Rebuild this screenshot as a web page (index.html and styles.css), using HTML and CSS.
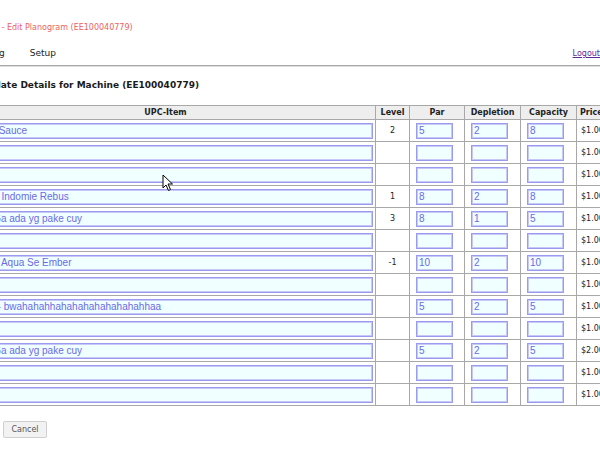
FILE: index.html
```html
<!DOCTYPE html>
<html>
<head>
<meta charset="utf-8">
<title>Edit Planogram</title>
<link rel="stylesheet" href="styles.css">
</head>
<body>
<div class="page">
  <div class="title">Planogram - Edit Planogram (EE100040779)</div>
  <div class="nav">
    <div class="nav-links"><span>Reporting</span><span>Setup</span></div>
    <a class="logout" href="#">Logout</a>
  </div>
  <hr class="rule">
  <h2 class="heading">Planogram Template Details for Machine (EE100040779)</h2>
  <table class="grid">
    <colgroup>
      <col class="c-upc"><col class="c-level"><col class="c-par"><col class="c-dep"><col class="c-cap"><col class="c-price">
    </colgroup>
    <thead>
      <tr><th>UPC-Item</th><th>Level</th><th>Par</th><th>Depletion</th><th>Capacity</th><th class="left">Price</th></tr>
    </thead>
    <tbody>
      <tr><td class="upc"><input class="in-upc" value="10021 - Sauce"></td><td class="lvl">2</td><td class="num"><input class="in-num" value="5"></td><td class="num"><input class="in-num" value="2"></td><td class="num"><input class="in-num" value="8"></td><td class="price">$1.00</td></tr>
      <tr><td class="upc"><input class="in-upc" value=""></td><td class="lvl"></td><td class="num"><input class="in-num" value=""></td><td class="num"><input class="in-num" value=""></td><td class="num"><input class="in-num" value=""></td><td class="price">$1.00</td></tr>
      <tr><td class="upc"><input class="in-upc" value=""></td><td class="lvl"></td><td class="num"><input class="in-num" value=""></td><td class="num"><input class="in-num" value=""></td><td class="num"><input class="in-num" value=""></td><td class="price">$1.00</td></tr>
      <tr><td class="upc"><input class="in-upc" value="BR012 - Indomie Rebus"></td><td class="lvl">1</td><td class="num"><input class="in-num" value="8"></td><td class="num"><input class="in-num" value="2"></td><td class="num"><input class="in-num" value="8"></td><td class="price">$1.00</td></tr>
      <tr><td class="upc"><input class="in-upc" value="1004 - Ga ada yg pake cuy"></td><td class="lvl">3</td><td class="num"><input class="in-num" value="8"></td><td class="num"><input class="in-num" value="1"></td><td class="num"><input class="in-num" value="5"></td><td class="price">$1.00</td></tr>
      <tr><td class="upc"><input class="in-upc" value=""></td><td class="lvl"></td><td class="num"><input class="in-num" value=""></td><td class="num"><input class="in-num" value=""></td><td class="num"><input class="in-num" value=""></td><td class="price">$1.00</td></tr>
      <tr><td class="upc"><input class="in-upc" value="BR013 - Aqua Se Ember"></td><td class="lvl">-1</td><td class="num"><input class="in-num" value="10"></td><td class="num"><input class="in-num" value="2"></td><td class="num"><input class="in-num" value="10"></td><td class="price">$1.00</td></tr>
      <tr><td class="upc"><input class="in-upc" value=""></td><td class="lvl"></td><td class="num"><input class="in-num" value=""></td><td class="num"><input class="in-num" value=""></td><td class="num"><input class="in-num" value=""></td><td class="price">$1.00</td></tr>
      <tr><td class="upc"><input class="in-upc" value="Tester1 - bwahahahhahahahahahahahahhaa"></td><td class="lvl"></td><td class="num"><input class="in-num" value="5"></td><td class="num"><input class="in-num" value="2"></td><td class="num"><input class="in-num" value="5"></td><td class="price">$1.00</td></tr>
      <tr><td class="upc"><input class="in-upc" value=""></td><td class="lvl"></td><td class="num"><input class="in-num" value=""></td><td class="num"><input class="in-num" value=""></td><td class="num"><input class="in-num" value=""></td><td class="price">$1.00</td></tr>
      <tr><td class="upc"><input class="in-upc" value="1004 - Ga ada yg pake cuy"></td><td class="lvl"></td><td class="num"><input class="in-num" value="5"></td><td class="num"><input class="in-num" value="2"></td><td class="num"><input class="in-num" value="5"></td><td class="price">$2.00</td></tr>
      <tr><td class="upc"><input class="in-upc" value=""></td><td class="lvl"></td><td class="num"><input class="in-num" value=""></td><td class="num"><input class="in-num" value=""></td><td class="num"><input class="in-num" value=""></td><td class="price">$1.00</td></tr>
      <tr><td class="upc"><input class="in-upc" value=""></td><td class="lvl"></td><td class="num"><input class="in-num" value=""></td><td class="num"><input class="in-num" value=""></td><td class="num"><input class="in-num" value=""></td><td class="price">$1.00</td></tr>
    </tbody>
  </table>
  <div class="actions"><button class="btn">Save</button><button class="btn">Cancel</button></div>
</div>
<svg class="cursor" width="12" height="18" viewBox="0 0 12 18"><path d="M1 1 L1 14 L4 11 L6.5 16.5 L8.5 15.5 L6 10 L10.5 10 Z" fill="#fff" stroke="#000" stroke-width="1" stroke-linejoin="round"/></svg>
</body>
</html>
```
FILE: styles.css
```css
html, body {
  margin: 0;
  padding: 0;
  background: #fff;
  overflow: hidden;
  width: 600px;
  height: 450px;
}
body {
  font-family: "DejaVu Sans", Verdana, sans-serif;
  font-size: 8px;
  color: #222;
  position: relative;
}
.page {
  width: 680px;
  margin-left: -45px;
  padding-top: 22px;
}
.title {
  margin-left: 1px;
  line-height: 12px;
  color: #ee5f5f;
  font-size: 8px;
}
.nav {
  margin-top: 13px;
  display: flex;
  justify-content: space-between;
  align-items: baseline;
  height: 12px;
  line-height: 12px;
  font-size: 9px;
  width: 645px;
}
.nav-links {
  display: flex;
  gap: 25px;
  margin-left: 6px;
}
.logout {
  color: #5b2d99;
  text-decoration: underline;
  font-size: 8px;
}
.rule {
  margin: 6px 0 0 0;
  border: 0;
  border-top: 1px solid #a8a8a8;
  border-bottom: 1px solid #dcdcdc;
  height: 0;
  width: 700px;
}
.heading {
  margin: 12px 0 0 -42px;
  font-size: 9px;
  line-height: 12px;
  font-weight: bold;
  color: #1a1a1a;
}
.grid {
  margin-top: 14px;
  border-collapse: collapse;
  table-layout: fixed;
  width: 661px;
}
.c-upc { width: 420px; }
.c-level { width: 34px; }
.c-par { width: 55px; }
.c-dep { width: 56px; }
.c-cap { width: 56px; }
.c-price { width: 40px; }
.grid th {
  background: #eeeeee;
  border: 1px solid #a8a8a8;
  font-size: 8px;
  font-weight: bold;
  height: 13px;
  padding: 0;
  line-height: 13px;
  color: #222;
}
.grid th.left { text-align: left; padding-left: 3px; }
.grid td {
  border: 1px solid #a8a8a8;
  height: 21px;
  padding: 0;
  font-size: 8px;
  color: #222;
}
.grid td.upc { padding: 0 2px 0 3px; }
.grid td.lvl { text-align: center; }
.grid td.num { padding-left: 6px; }
.grid td.price { padding-left: 4px; }
.in-upc, .in-num {
  box-sizing: border-box;
  height: 16px;
  margin: 0;
  display: block;
  border: 1px solid #9a9aee;
  box-shadow: inset 0 0 0 1px #c8c8f6;
  background: #f0ffff;
  color: #6a6ae8;
  font-family: "Liberation Sans", Arial, sans-serif;
  font-size: 10px;
  padding: 0 2px;
  outline: none;
}
.in-upc { width: 100%; }
.in-num { width: 37px; }
.actions {
  margin-top: 15px;
  display: flex;
  gap: 4px;
  margin-left: 0;
}
.btn {
  font-family: "DejaVu Sans", Verdana, sans-serif;
  font-size: 8px;
  color: #555;
  background: #f2f2f2;
  border: 1px solid #cfcfcf;
  border-radius: 2px;
  height: 17px;
  width: 44px;
  padding: 0;
}
.cursor {
  position: absolute;
  left: 162px;
  top: 174px;
}
```
